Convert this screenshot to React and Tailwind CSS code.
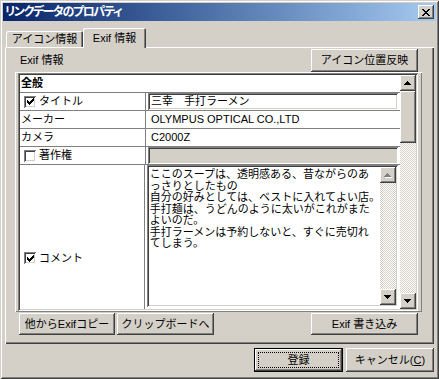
import React from "react";

const FONT = "font-['Liberation_Sans','Noto_Sans_CJK_JP',sans-serif]";
const RAISED =
  "shadow-[inset_-1px_-1px_#404040,inset_1px_1px_#ffffff,inset_-2px_-2px_#808080,inset_2px_2px_#d4d0c8]";
const SUNKEN =
  "shadow-[inset_1px_1px_#808080,inset_-1px_-1px_#ffffff,inset_2px_2px_#404040,inset_-2px_-2px_#d4d0c8]";
const CHECKER =
  "bg-[image:repeating-conic-gradient(#d4d0c8_0_25%,#ffffff_0_50%)] bg-[length:2px_2px]";

const CHECK = [
  "......#",
  ".....##",
  "#...###",
  "##.###.",
  "#####..",
  ".###...",
  "..#....",
];

const CLOSE = [
  "##....##",
  ".##..##.",
  "..####..",
  "...##...",
  "..####..",
  ".##..##.",
  "##....##",
];

function Pixels({ rows, w, h }) {
  const rects = [];
  rows.forEach((row, y) =>
    row.split("").forEach((c, x) => {
      if (c === "#") rects.push(<rect key={x + "-" + y} x={x} y={y} width="1" height="1" fill="#000" />);
    })
  );
  return (
    <svg width={w} height={h} viewBox={`0 0 ${w} ${h}`} shapeRendering="crispEdges">
      {rects}
    </svg>
  );
}

function Arrow({ down, disabled }) {
  const rows = down ? [7, 5, 3, 1] : [1, 3, 5, 7];
  return (
    <svg width="8" height="5" viewBox="0 0 8 5" shapeRendering="crispEdges">
      {disabled &&
        rows.map((w, i) => (
          <rect key={"s" + i} x={(7 - w) / 2 + 1} y={i + 1} width={w} height="1" fill="#ffffff" />
        ))}
      {rows.map((w, i) => (
        <rect key={i} x={(7 - w) / 2} y={i} width={w} height="1" fill={disabled ? "#808080" : "#000000"} />
      ))}
    </svg>
  );
}

function ScrollBtn({ down, disabled }) {
  return (
    <div className={`h-[16px] shrink-0 flex items-center justify-center bg-[#d4d0c8] ${RAISED}`}>
      <Arrow down={down} disabled={disabled} />
    </div>
  );
}

function Check({ checked }) {
  return (
    <span className={`w-[12px] h-[12px] shrink-0 bg-white flex items-center justify-center ${SUNKEN}`}>
      {checked && <Pixels rows={CHECK} w={7} h={7} />}
    </span>
  );
}

function Btn({ className = "", children }) {
  return (
    <div className={`flex items-center justify-center bg-[#d4d0c8] whitespace-nowrap ${RAISED} ${className}`}>
      {children}
    </div>
  );
}

const comment = [
  "ここのスープは、透明感ある、昔ながらのあ",
  "っさりとしたもの",
  "自分の好みとしては、ベストに入れてよい店。",
  "手打麺は、うどんのように太いがこれがまた",
  "よいのだ。",
  "手打ラーメンは予約しないと、すぐに売切れ",
  "てしまう。",
];

export default function App() {
  return (
    <div
      className={`w-[439px] h-[379px] bg-[#d4d0c8] p-[3px] flex flex-col text-[11px] text-black ${FONT} shadow-[inset_1px_1px_#d4d0c8,inset_-1px_-1px_#404040,inset_2px_2px_#ffffff,inset_-2px_-2px_#808080]`}
    >
      {/* title bar */}
      <div className="h-[18px] shrink-0 flex items-center justify-between pl-[2px] pr-[2px] bg-linear-to-r from-[#0a246a] to-[#a6caf0]">
        <span className="text-white font-bold text-[12px] tracking-[-1.4px] [font-feature-settings:'palt']">
          リンクデータのプロパティ
        </span>
        <div className={`w-[16px] h-[14px] flex items-center justify-center bg-[#d4d0c8] ${RAISED}`}>
          <Pixels rows={CLOSE} w={8} h={7} />
        </div>
      </div>

      {/* tabs */}
      <div className="mt-[7px] ml-[2px] h-[19px] shrink-0 flex items-end relative z-10">
        <div className="ml-[1px] w-[77px] h-[16px] flex items-center justify-center rounded-t-[2px] shadow-[inset_1px_1px_#ffffff,inset_-1px_0_#404040,inset_-2px_0_#808080]">
          アイコン情報
        </div>
        <div className="w-[63px] h-[20px] -mb-[1px] flex items-center justify-center bg-[#d4d0c8] rounded-t-[2px] shadow-[inset_1px_1px_#ffffff,inset_-1px_0_#404040,inset_-2px_0_#808080]">
          Exif 情報
        </div>
      </div>

      {/* tab panel */}
      <div className="ml-[2px] w-[429px] h-[297px] shrink-0 flex flex-col shadow-[inset_1px_1px_#ffffff,inset_-1px_-1px_#404040,inset_-2px_-2px_#808080]">
        <div className="pt-[2px] pl-[15px] pr-[16px] flex items-center justify-between">
          <span>Exif 情報</span>
          <Btn className="w-[107px] h-[23px]">アイコン位置反映</Btn>
        </div>

        {/* grid frame */}
        <div className="ml-[10px] w-[407px] h-[240px] pt-[1px] pl-[3px] shadow-[inset_1px_1px_#ffffff,inset_-1px_-1px_#808080]">
          <div className={`w-[400px] h-[238px] p-[2px] bg-white flex ${SUNKEN}`}>
            <div className="w-[380px] flex flex-col">
              <div className="h-[18px] border-b border-[#808080] flex items-center pl-[1px] font-bold">全般</div>

              <div className="h-[18px] border-b border-[#808080] flex">
                <div className="w-[126px] border-r border-[#808080] flex items-center pl-[4px] gap-[3px]">
                  <Check checked />
                  タイトル
                </div>
                <div className="flex-1 pl-[2px] pr-[2px]">
                  <div className={`h-full bg-white flex items-center pl-[3px] ${SUNKEN}`}>三幸　手打ラーメン</div>
                </div>
              </div>

              <div className="h-[18px] border-b border-[#808080] flex">
                <div className="w-[126px] border-r border-[#808080] flex items-center pl-[1px]">メーカー</div>
                <div className="flex-1 flex items-center pl-[5px]">OLYMPUS OPTICAL CO.,LTD</div>
              </div>

              <div className="h-[18px] border-b border-[#808080] flex">
                <div className="w-[126px] border-r border-[#808080] flex items-center pl-[1px]">カメラ</div>
                <div className="flex-1 flex items-center pl-[5px]">C2000Z</div>
              </div>

              <div className="h-[18px] border-b border-[#808080] flex">
                <div className="w-[126px] border-r border-[#808080] flex items-center pl-[4px] gap-[3px]">
                  <Check />
                  著作権
                </div>
                <div className="flex-1 pl-[2px] pr-[2px]">
                  <div className={`h-full bg-[#d4d0c8] ${SUNKEN}`} />
                </div>
              </div>

              <div className="h-[144px] flex">
                <div className="w-[126px] border-r border-[#808080] pl-[4px] pt-[87px]">
                  <div className="h-[12px] flex items-center gap-[3px]">
                    <Check checked />
                    コメント
                  </div>
                </div>
                <div className="flex-1 pl-[2px] pr-[2px] pb-[2px]">
                  <div className={`h-full bg-white p-[2px] flex ${SUNKEN}`}>
                    <div className="flex-1 overflow-hidden pl-[1px] pt-[2px]">
                      {comment.map((line) => (
                        <div key={line} className="whitespace-nowrap h-[11.5px] leading-[11.5px]">
                          {line}
                        </div>
                      ))}
                    </div>
                    <div className="w-[16px] flex flex-col">
                      <ScrollBtn disabled />
                      <div className={`flex-1 ${CHECKER}`} />
                      <ScrollBtn down />
                    </div>
                  </div>
                </div>
              </div>
            </div>

            {/* grid scrollbar */}
            <div className="w-[16px] flex flex-col">
              <ScrollBtn />
              <div className={`h-[52px] shrink-0 bg-[#d4d0c8] ${RAISED}`} />
              <div className={`flex-1 ${CHECKER}`} />
              <ScrollBtn down />
            </div>
          </div>
        </div>

        <div className="mt-[1px] pl-[14px] pr-[16px] flex items-center">
          <Btn className="w-[96px] h-[22px]">他からExifコピー</Btn>
          <Btn className="ml-[2px] w-[97px] h-[22px]">クリップボードへ</Btn>
          <Btn className="ml-auto w-[107px] h-[22px]">Exif 書き込み</Btn>
        </div>
      </div>

      {/* dialog buttons */}
      <div className="mt-[4px] pr-[2px] flex justify-end gap-[3px]">
        <div className="w-[89px] h-[24px] border border-black">
          <div className={`h-full bg-[#d4d0c8] p-[3px] ${RAISED}`}>
            <div className="h-full border border-dotted border-black flex items-center justify-center">登録</div>
          </div>
        </div>
        <Btn className="w-[88px] h-[24px]">
          キャンセル(<span className="underline">C</span>)
        </Btn>
      </div>
    </div>
  );
}
